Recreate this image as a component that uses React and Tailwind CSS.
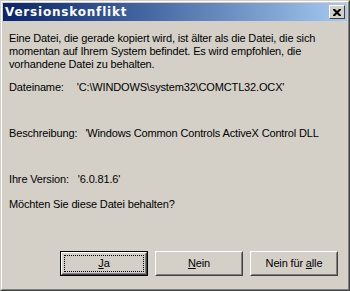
export default function App() {
  return (
    <div className="w-[350px] h-[291px] bg-[#d4d0c8] text-[11px] text-black" style={{ fontFamily: '"Liberation Sans", Arial, sans-serif' }}>
      <div className="h-full border border-t-[#d4d0c8] border-l-[#d4d0c8] border-r-[#404040] border-b-[#404040]">
        <div className="h-full flex flex-col border border-t-white border-l-white border-r-[#808080] border-b-[#808080] p-px">
          <div className="h-[18px] flex items-center justify-between pl-[2px] pr-[2px] bg-gradient-to-r from-[#0a246a] to-[#a6caf0]">
            <span className="font-bold text-white text-[12px] leading-none tracking-[0.8px]" style={{ fontFamily: '"DejaVu Sans", sans-serif' }}>Versionskonflikt</span>
            <button className="w-4 h-[14px] flex items-center justify-center bg-[#d4d0c8] border border-t-white border-l-white border-r-[#404040] border-b-[#404040]">
              <svg width="8" height="7" viewBox="0 0 8 7">
                <path d="M0 0h2l2 2 2-2h2v1l-2.5 2.5L8 6v1H6L4 5 2 7H0V6l2.5-2.5L0 1z" fill="#000" />
              </svg>
            </button>
          </div>
          <div className="flex-1 flex flex-col pl-[6px] pr-[6px] pt-[11px] leading-[13px] tracking-[-0.15px]">
            <p>
              Eine Datei, die gerade kopiert wird, ist älter als die Datei, die sich momentan auf Ihrem System befindet. Es wird empfohlen, die vorhandene Datei zu behalten.
            </p>
            <div className="mt-[10px] flex gap-[13px]">
              <span>Dateiname:</span>
              <span>'C:\WINDOWS\system32\COMCTL32.OCX'</span>
            </div>
            <div className="mt-[33px] flex gap-[8px]">
              <span>Beschreibung:</span>
              <span>'Windows Common Controls ActiveX Control DLL</span>
            </div>
            <div className="mt-[33px] flex gap-[9px]">
              <span>Ihre Version:</span>
              <span>'6.0.81.6'</span>
            </div>
            <p className="mt-[12px]">Möchten Sie diese Datei behalten?</p>
            <div className="mt-auto mb-[12px] pr-[3px] flex justify-end gap-[7px]">
              <button className="w-[88px] h-[25px] border border-black bg-[#d4d0c8]">
                <div className="h-full border border-t-white border-l-white border-r-[#404040] border-b-[#404040]">
                  <div className="h-full border border-t-[#d4d0c8] border-l-[#d4d0c8] border-r-[#808080] border-b-[#808080] p-px">
                    <div className="h-full outline-1 outline-dotted outline-black -outline-offset-1 flex items-center justify-center">
                      <span><span className="underline">J</span>a</span>
                    </div>
                  </div>
                </div>
              </button>
              <button className="w-[88px] h-[25px] bg-[#d4d0c8] border border-t-white border-l-white border-r-[#404040] border-b-[#404040]">
                <div className="h-full border border-t-[#d4d0c8] border-l-[#d4d0c8] border-r-[#808080] border-b-[#808080] flex items-center justify-center">
                  <span><span className="underline">N</span>ein</span>
                </div>
              </button>
              <button className="w-[88px] h-[25px] bg-[#d4d0c8] border border-t-white border-l-white border-r-[#404040] border-b-[#404040]">
                <div className="h-full border border-t-[#d4d0c8] border-l-[#d4d0c8] border-r-[#808080] border-b-[#808080] flex items-center justify-center">
                  <span>Nein für <span className="underline">a</span>lle</span>
                </div>
              </button>
            </div>
          </div>
        </div>
      </div>
    </div>
  );
}
